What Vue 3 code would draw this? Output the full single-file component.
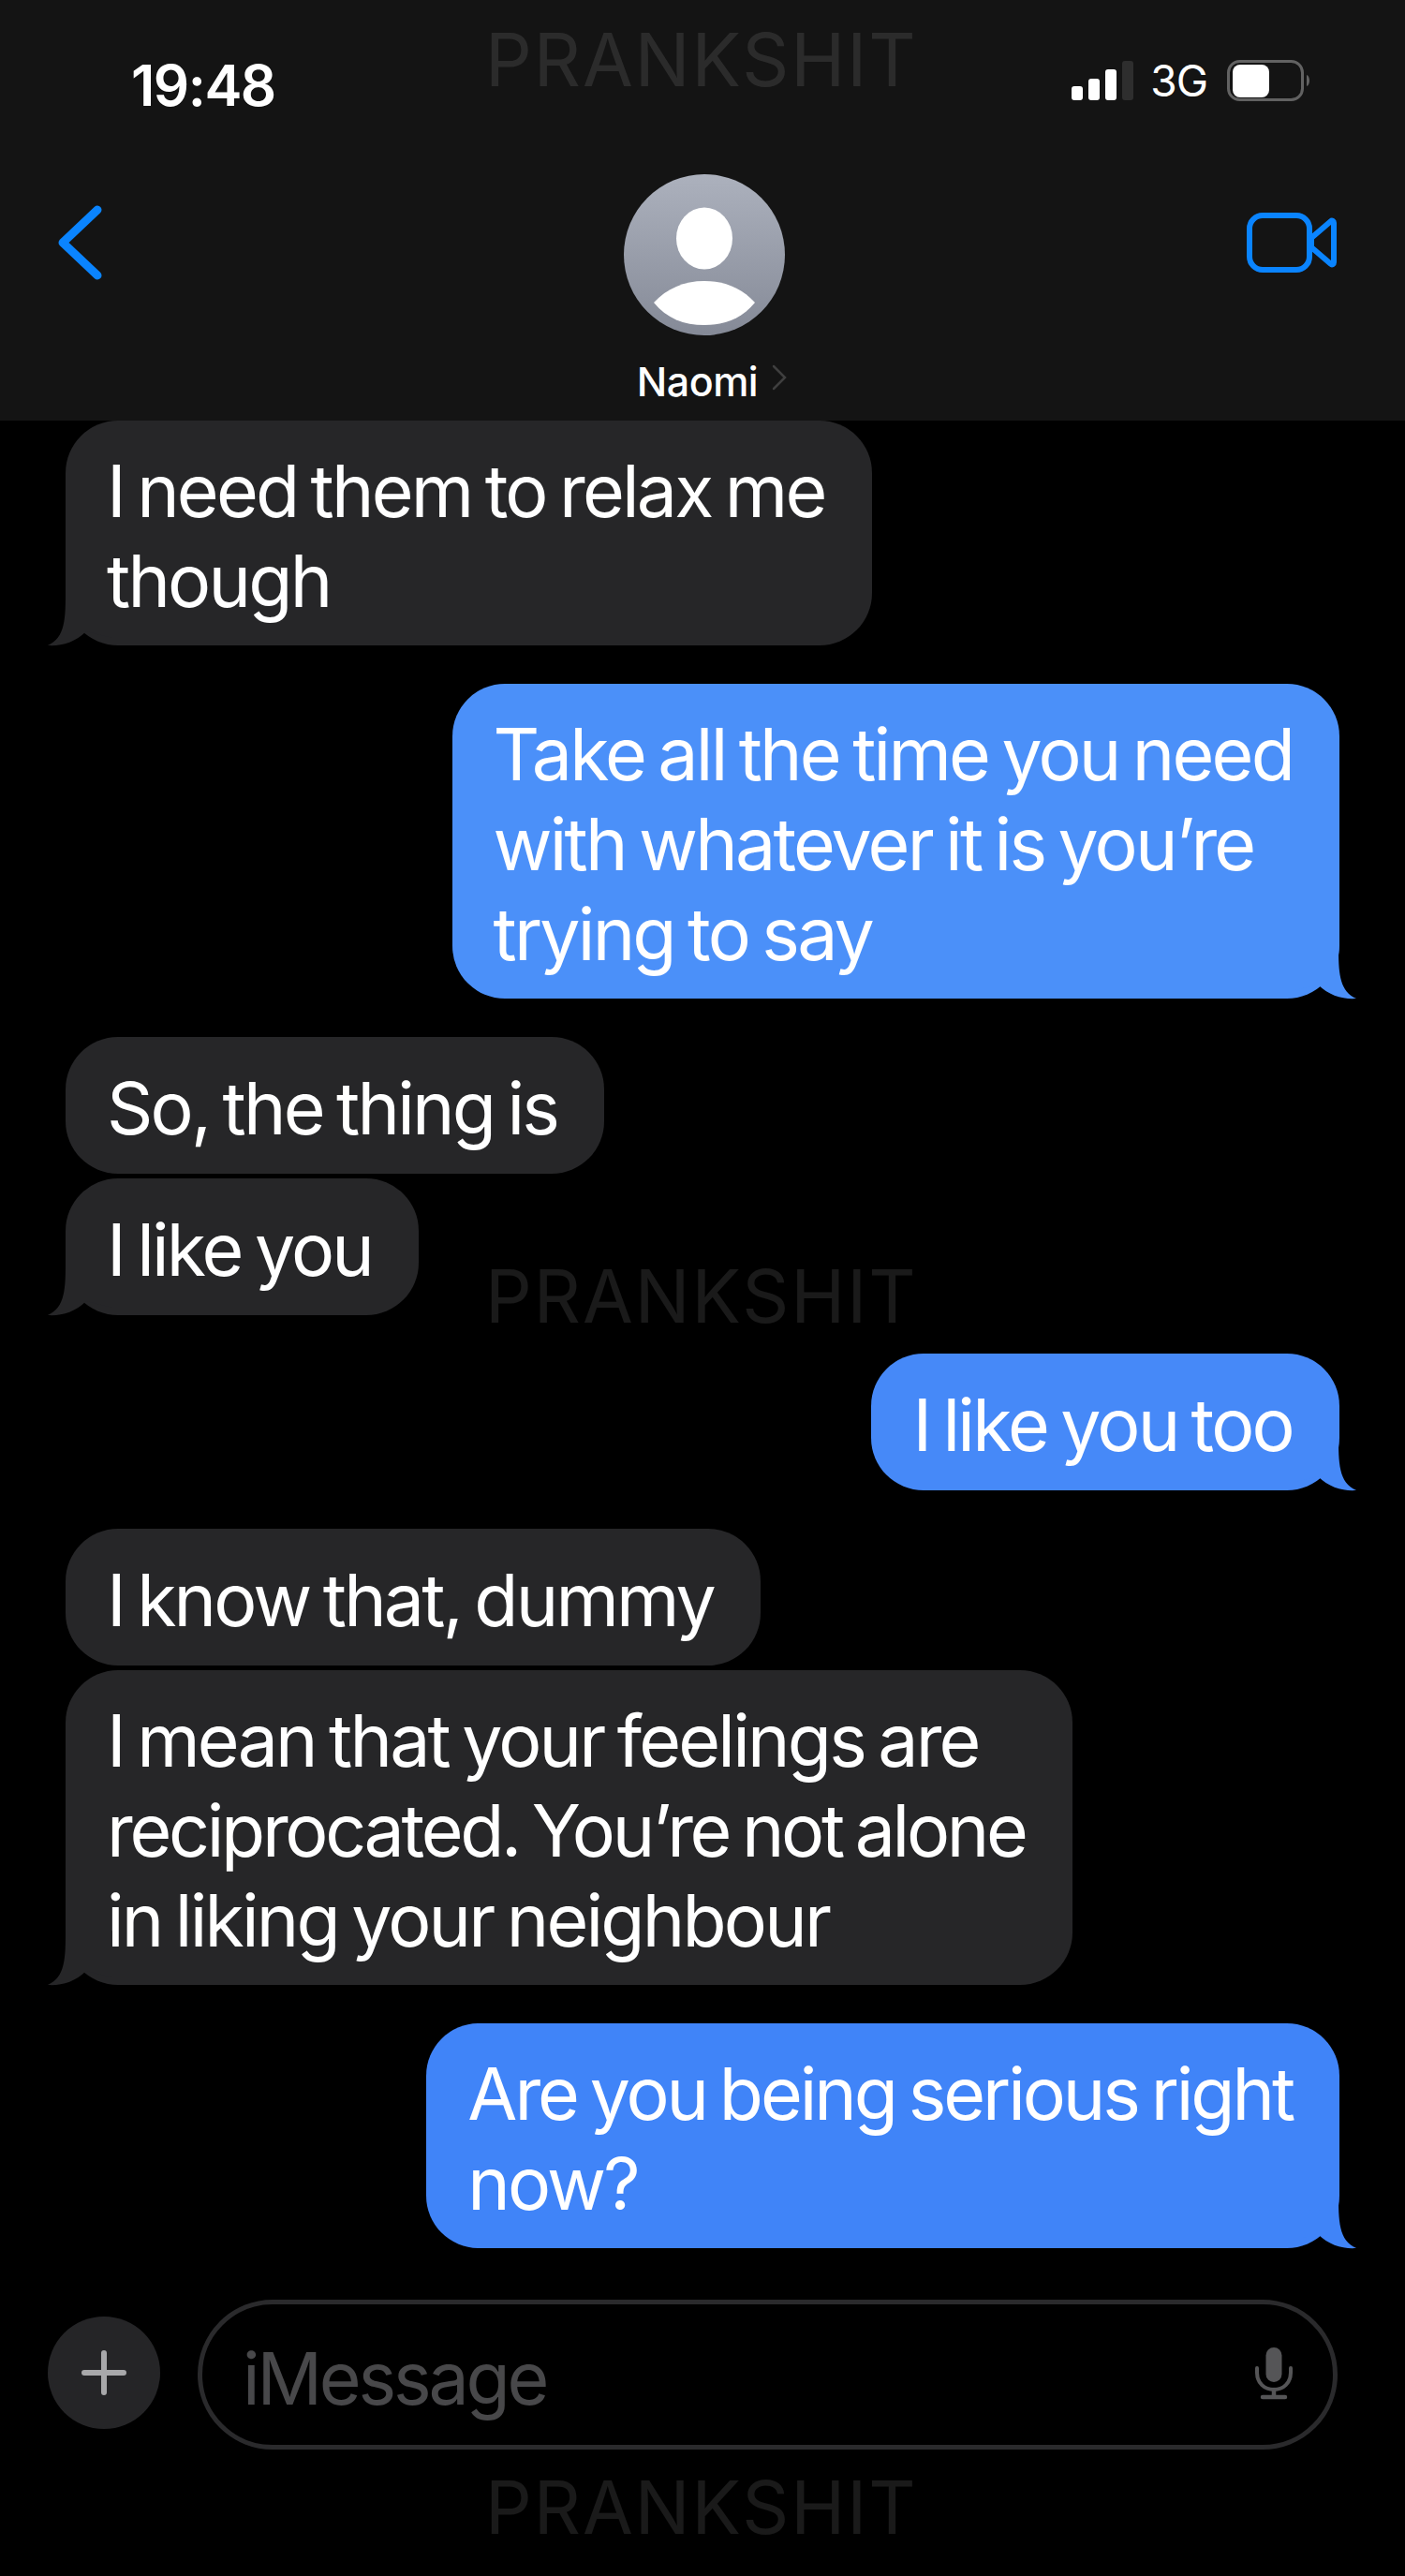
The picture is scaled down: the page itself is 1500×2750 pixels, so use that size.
<template>
  <div class="phone">
    <header class="top">
      <div class="status">
        <span class="time">19:48</span>
        <div class="status-right">
          <svg class="signal" width="66" height="42" viewBox="0 0 66 42">
            <rect x="0" y="27" width="12" height="15" rx="3" fill="#fff" />
            <rect x="18" y="19" width="12" height="23" rx="3" fill="#fff" />
            <rect x="36" y="9" width="12" height="33" rx="3" fill="#fff" />
            <rect x="54" y="0" width="12" height="42" rx="3" fill="#2e2e2e" />
          </svg>
          <span class="net">3G</span>
          <svg class="battery" width="90" height="44" viewBox="0 0 90 44">
            <rect x="1.5" y="1.5" width="79" height="41" rx="12" fill="none" stroke="#626262" stroke-width="3" />
            <rect x="6" y="5" width="39" height="35" rx="8" fill="#fff" />
            <path d="M85 16 C89 17 89 27 85 28 Z" fill="#626262" />
          </svg>
        </div>
      </div>
      <div class="nav">
        <svg class="back" width="48" height="80" viewBox="0 0 48 80">
          <path d="M42 5 L5 40 L42 75" fill="none" stroke="#0a84ff" stroke-width="9" stroke-linecap="round" stroke-linejoin="round" />
        </svg>
        <div class="contact">
          <div class="avatar">
            <svg width="172" height="172" viewBox="0 0 172 172">
              <defs>
                <linearGradient id="avatarFill" x1="0" y1="0" x2="0" y2="1">
                  <stop offset="0" stop-color="#acb1bd" />
                  <stop offset="1" stop-color="#858a97" />
                </linearGradient>
              </defs>
              <circle cx="86" cy="86" r="86" fill="url(#avatarFill)" />
              <ellipse cx="86" cy="68.5" rx="30" ry="33" fill="#fff" />
              <path d="M32 137 C46 122 64 114 86 114 C108 114 126 122 140 137 C126 154 108 161 86 161 C64 161 46 154 32 137 Z" fill="#fff" />
            </svg>
          </div>
          <div class="name-row">
            <span class="name">Naomi</span>
            <svg class="name-chevron" width="16" height="28" viewBox="0 0 16 28">
              <path d="M2 2 L14 14 L2 26" fill="none" stroke="#3f3f3f" stroke-width="2.5" stroke-linecap="round" />
            </svg>
          </div>
        </div>
        <svg class="video" width="96" height="64" viewBox="0 0 96 64">
          <rect x="3" y="3" width="64" height="58" rx="14" fill="none" stroke="#0a84ff" stroke-width="6" />
          <path d="M69 27 L90 9 C91 8 93 9 93 11 L93 53 C93 55 91 56 90 55 L69 37 Z" fill="none" stroke="#0a84ff" stroke-width="6" stroke-linejoin="round" />
        </svg>
      </div>
    </header>

    <main class="thread">
      <div
        v-for="msg in messages"
        :key="msg.id"
        class="bubble"
        :class="[msg.from, { close: msg.close }]"
        :style="{ backgroundColor: msg.color, color: msg.color }"
      >
        <span class="text">
          <span
            v-for="(line, i) in msg.lines"
            :key="line"
            class="line"
            :class="{ tight: i === msg.tightLine }"
          >{{ line }}</span>
        </span>
        <svg v-if="msg.tail" class="tail" width="70" height="60" viewBox="0 0 70 60">
          <path d="M50 0 C50 28 50 50 69 58 C55 59 40 55 28 43 L0 50 L0 0 Z" fill="currentColor" />
        </svg>
      </div>
    </main>

    <footer class="composer">
      <div class="plus">
        <svg width="48" height="48" viewBox="0 0 48 48">
          <path d="M24 3 V45 M3 24 H45" stroke="#a8a8aa" stroke-width="6" stroke-linecap="round" />
        </svg>
      </div>
      <div class="input">
        <span class="placeholder">iMessage</span>
        <svg class="mic" width="40" height="58" viewBox="0 0 40 58">
          <rect x="11.5" y="0" width="17" height="37" rx="8.5" fill="#555557" />
          <path d="M2 22 V27 C2 38 10 45 20 45 C30 45 38 38 38 27 V22" fill="none" stroke="#555557" stroke-width="4" stroke-linecap="round" />
          <path d="M20 45 V53 M8 53 H32" stroke="#555557" stroke-width="4.5" stroke-linecap="round" />
        </svg>
      </div>
    </footer>

    <span v-for="wm in watermarks" :key="wm" class="watermark" :class="wm">PRANKSHIT</span>
  </div>
</template>

<script setup>
const blueTop = '#4b90f9'
const blueMid = '#4689f8'
const blueLow = '#4084f8'
const gray = '#262628'

const messages = [
  { id: 1, from: 'them', color: gray, tail: true, lines: ['I need them to relax me', 'though'] },
  { id: 2, from: 'me', color: blueTop, tail: true, lines: ['Take all the time you need', 'with whatever it is you’re', 'trying to say'] },
  { id: 3, from: 'them', color: gray, lines: ['So, the thing is'] },
  { id: 4, from: 'them', color: gray, tail: true, close: true, lines: ['I like you'] },
  { id: 5, from: 'me', color: blueMid, tail: true, lines: ['I like you too'] },
  { id: 6, from: 'them', color: gray, lines: ['I know that, dummy'] },
  { id: 7, from: 'them', color: gray, tail: true, close: true, tightLine: 1, lines: ['I mean that your feelings are', 'reciprocated. You’re not alone', 'in liking your neighbour'] },
  { id: 8, from: 'me', color: blueLow, tail: true, tightLine: 0, lines: ['Are you being serious right', 'now?'] }
]

const watermarks = ['wm-top', 'wm-mid', 'wm-bottom']
</script>

<style scoped>
.phone {
  position: relative;
  width: 1500px;
  height: 2750px;
  background: #000;
  overflow: hidden;
  font-family: Inter, "Liberation Sans", sans-serif;
  color: #fff;
}

.top {
  height: 449px;
  background: #141414;
  box-sizing: border-box;
}

.status {
  height: 170px;
  display: flex;
  justify-content: space-between;
  align-items: flex-start;
  padding: 58px 100px 0 140px;
  box-sizing: border-box;
}

.time {
  font-size: 60px;
  line-height: 66px;
  font-weight: 600;
  letter-spacing: -1.5px;
}

.status-right {
  display: flex;
  align-items: center;
  gap: 21px;
  margin-top: 6px;
}

.signal {
  margin-right: -3px;
}

.net {
  font-size: 46px;
  line-height: 44px;
  font-weight: 400;
  letter-spacing: -1px;
}

.nav {
  display: grid;
  grid-template-columns: 1fr auto 1fr;
  padding: 0 58px 0 62px;
}

.back {
  margin-top: 49px;
}

.video {
  justify-self: end;
  margin-top: 57px;
  margin-right: 15px;
}

.contact {
  display: flex;
  flex-direction: column;
  align-items: center;
  margin-top: 16px;
}

.avatar {
  width: 172px;
  height: 172px;
}

.name-row {
  display: flex;
  align-items: center;
  gap: 15px;
  margin-top: 24px;
  margin-left: 16px;
}

.name {
  font-size: 43px;
  line-height: 50px;
  font-weight: 500;
  letter-spacing: -0.5px;
}

.name-chevron {
  margin-top: -8px;
}

.thread {
  display: flex;
  flex-direction: column;
  padding: 0 70px;
  gap: 41px;
}

.bubble {
  position: relative;
  display: flex;
  align-items: center;
  width: fit-content;
  min-height: 146px;
  box-sizing: border-box;
  padding: 27px 50px 21px 44px;
  border-radius: 56px;
}

.bubble.me {
  align-self: flex-end;
}

.bubble.close {
  margin-top: -36px;
}

.text {
  display: block;
  color: #fff;
  font-size: 77px;
  line-height: 96px;
  font-weight: 400;
  letter-spacing: -2.8px;
  word-spacing: -4.6px;
}

.line {
  display: block;
  white-space: nowrap;
}

.line.tight {
  letter-spacing: -3.3px;
}

.me .line.tight {
  letter-spacing: -3.1px;
}

.tail {
  position: absolute;
  right: -19px;
  bottom: -2px;
}

.them .tail {
  right: auto;
  left: -20px;
  transform: scaleX(-1);
}

.composer {
  position: absolute;
  left: 51px;
  right: 72px;
  top: 2455px;
  display: flex;
  align-items: center;
  gap: 40px;
}

.plus {
  width: 120px;
  height: 120px;
  margin-top: -5px;
  border-radius: 50%;
  background: #252527;
  display: flex;
  align-items: center;
  justify-content: center;
}

.input {
  flex: 1;
  height: 160px;
  box-sizing: border-box;
  border: 5px solid #2a2a2c;
  border-radius: 80px;
  display: flex;
  align-items: center;
  justify-content: space-between;
  padding: 0 43px 0 43px;
}

.placeholder {
  margin-top: 8px;
  font-size: 77px;
  line-height: 96px;
  color: #48484a;
  letter-spacing: -3.2px;
}

.watermark {
  position: absolute;
  left: 518px;
  font-size: 78px;
  line-height: 90px;
  font-weight: 400;
  letter-spacing: 2px;
  color: rgba(255, 255, 255, 0.1);
  pointer-events: none;
}

.wm-top {
  top: 19px;
}

.wm-mid {
  top: 1339px;
}

.wm-bottom {
  top: 2632px;
}
</style>

<style>
html,
body {
  margin: 0;
  background: #000;
}
</style>
